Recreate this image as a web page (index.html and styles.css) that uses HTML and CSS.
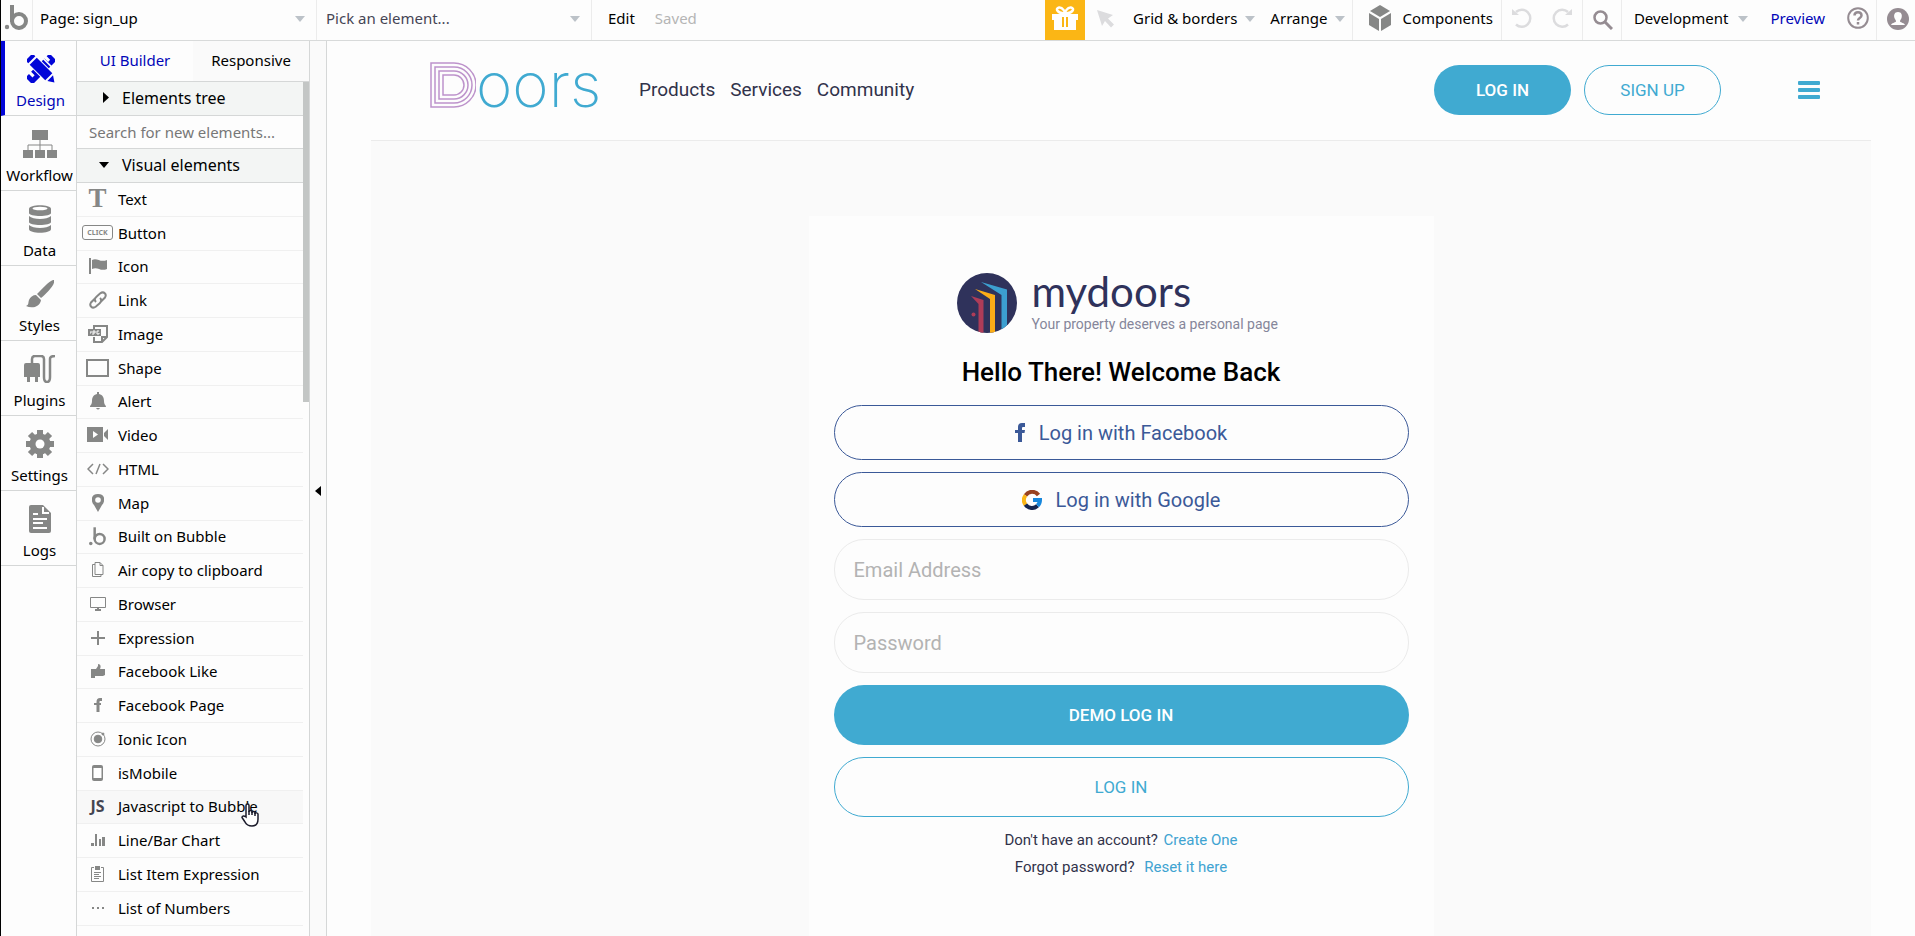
FILE: index.html
```
<!DOCTYPE html>
<html lang="en">
<head>
    <meta charset="utf-8">
    <title>sign_up | Bubble Editor</title>
    <link rel="stylesheet" href="styles.css">
</head>
<body>
<header class="topbar">
    <a class="topbar-logo" href="#" aria-label="Bubble">
        <svg width="24" height="26" viewBox="0 0 24 26" fill="none" stroke="#868786" stroke-width="4">
            <path d="M8 0v17"/><circle cx="15" cy="16" r="7"/><circle cx="3" cy="22" r="2.200" fill="#868786" stroke="none"/>
        </svg>
    </a>
    <div class="picker picker-page">
        <select aria-label="Page"><option>Page: sign_up</option></select>
    </div>
    <div class="picker picker-element">
        <select aria-label="Element"><option>Pick an element...</option></select>
    </div>
    <button class="top-btn">Edit</button>
    <span class="saved">Saved</span>
    <div class="topbar-right">
        <button class="gift" aria-label="Gift">
            <svg width="26" height="24" viewBox="0 0 26 24" fill="#fff">
                <path d="M0 8h26v6h-2v10H2V14H0z"/><path d="M10 11h6v10h-6z" fill="#fbb615"/><path d="M12 10h2v12h-2z"/>
                <path d="M13 7C5 8 3 2 7 1.500s6 5 6 5.500c0-.5 2-6 6-5.500S21 8 13 7z" fill="none" stroke="#fff" stroke-width="2.500"/>
            </svg>
        </button>
        <button class="icon-btn pointer" aria-label="Select">
            <svg width="20" height="20" viewBox="0 0 20 20" fill="#dcdcde"><path d="M1 1l16 5-5 3.500 6 6-3 3-6-6.500L6 17z"/></svg>
        </button>
        <button class="top-btn menu">Grid &amp; borders</button>
        <button class="top-btn menu arrange">Arrange</button>
        <button class="top-btn components">
            <svg width="22" height="26" viewBox="0 0 22 26" fill="#868786"><path d="M11 0l10 6-10 6L1 6z"/><path d="M0 8l10 6v12L0 20z"/><path d="M22 8l-10 6v12l10-6z"/></svg>
            Components
        </button>
        <div class="history">
            <button aria-label="Undo"><svg width="20" height="20" viewBox="0 0 20 20" fill="none" stroke="#dcdcde" stroke-width="2.500"><path d="M4 4a8.500 8.500 0 1 1 0 12.500"/><path d="M0 1v6h7z" fill="#dcdcde" stroke="none"/></svg></button>
            <button aria-label="Redo"><svg width="20" height="20" viewBox="0 0 20 20" fill="none" stroke="#dcdcde" stroke-width="2.500"><path d="M16 4a8.500 8.500 0 1 0 0 12.500"/><path d="M20 1v6h-7z" fill="#dcdcde" stroke="none"/></svg></button>
        </div>
        <button class="icon-btn search-btn" aria-label="Search">
            <svg width="20" height="20" viewBox="0 0 20 20" fill="none" stroke="#958c92" stroke-width="2.500"><circle cx="7.500" cy="7.500" r="6"/><path d="M12 12l7 7" stroke-width="3"/></svg>
        </button>
        <button class="top-btn menu development">Development</button>
        <a class="preview" href="#">Preview</a>
        <button class="icon-btn help" aria-label="Help">
            <svg width="22" height="22" viewBox="0 0 22 22" fill="none" stroke="#958c92"><circle cx="11" cy="11" r="9.800" stroke-width="2"/><path d="M7.500 8.500c0-4.500 7-4.500 7 0 0 2.500-3.500 2.500-3.500 5" stroke-width="2.500"/><path d="M11 15v2.500" stroke-width="2.500"/></svg>
        </button>
        <button class="icon-btn user" aria-label="Account">
            <svg width="22" height="22" viewBox="0 0 22 22"><circle cx="11" cy="11" r="11" fill="#958c92"/><path d="M11 4c3.500 0 4.500 3 3.500 6-.5 1.500-1.500 2-1.500 3.500 1 1.500 4 1 5 3.500H4c1-2.500 4-2 5-3.500C9 12 8 11.500 7.500 10c-1-3 0-6 3.500-6z" fill="#fff"/></svg>
        </button>
    </div>
</header>

<div class="editor">
    <nav class="rail">
        <a class="rail-item active" href="#">
            <svg width="28" height="28" viewBox="0 0 28 28" fill="#0206d8">
                <!-- ruler -->
                <g transform="rotate(-45 14 14)"><path d="M-3 10q0-1 1-1h4v5h3V9h19v5h3V9h3q1 0 1 1v8q0 1-1 1H-2q-1 0-1-1z"/><path d="M23 8v12" stroke="#fdfdfd" stroke-width="1.500"/></g>
                <!-- pencil -->
                <g transform="rotate(45 14 14)"><path d="M-4 8h30v12H-4z" fill="#fdfdfd"/><path d="M-3 11q0-2 2-2h2v10h-2q-2 0-2-2zM3 9h22v10H3zM27 10l6 4-6 4z"/></g>
            </svg>
            Design
        </a>
        <a class="rail-item" href="#">
            <svg width="34" height="28" viewBox="0 0 34 28" fill="#868786"><path d="M9 0h16v10H9zM0 20h10v8H0zM12 20h10v8H12zM24 20h10v8H24z"/><path d="M17 10v10M5 20v-5h24v5" fill="none" stroke="#868786"/></svg>
            Workflow
        </a>
        <a class="rail-item" href="#">
            <svg width="22" height="28" viewBox="0 0 22 28" fill="#868786"><path d="M0 4c0-5 22-5 22 0v4c0 4-22 4-22 0z"/><path d="M0 11c4 4 18 4 22 0v6c0 4-22 4-22 0zM0 20c4 4 18 4 22 0v4c0 5-22 5-22 0z"/><ellipse cx="11" cy="3.500" rx="7.500" ry="1.800" fill="#fff"/></svg>
            Data
        </a>
        <a class="rail-item" href="#">
            <svg width="28" height="28" viewBox="0 0 28 28" fill="#868786"><path d="M28 0c2 4-8 14-13 18l-4-4C15 10 25-1 28 0z"/><path d="M10 15l5 5c-1 7-9 9-15 6 3-1 2-3 3-6s4-5 7-5z"/></svg>
            Styles
        </a>
        <a class="rail-item" href="#">
            <svg width="32" height="28" viewBox="0 0 32 28" fill="#868786"><path d="M0 10q0-2 2-2h12q2 0 2 2v12h-2v5h-3v-5H6v5H3v-5H0z"/><path d="M8 8V4q0-3 3-3h6q3 0 3 3v18q0 5 3 5t3-5V4q0-3 5-3" fill="none" stroke="#868786" stroke-width="2.500"/></svg>
            Plugins
        </a>
        <a class="rail-item" href="#">
            <svg width="28" height="28" viewBox="0 0 28 28"><g stroke="#868786" stroke-width="6"><path d="M14 0v28M0 14h28M4 4l20 20M24 4L4 24"/></g><circle cx="14" cy="14" r="10.500" fill="#868786"/><circle cx="14" cy="14" r="4.500" fill="#fff"/></svg>
            Settings
        </a>
        <a class="rail-item" href="#">
            <svg width="22" height="28" viewBox="0 0 22 28"><path d="M2 0h12l8 8v18q0 2-2 2H2q-2 0-2-2V2q0-2 2-2z" fill="#868786"/><path d="M14 2v6h6M4 9h5M4 14h14M4 18h10M4 23h14" fill="none" stroke="#fff" stroke-width="2"/></svg>
            Logs
        </a>
    </nav>

    <aside class="panel">
        <div class="tabs">
            <button class="tab active">UI Builder</button>
            <button class="tab">Responsive</button>
        </div>
        <div class="palette">
            <button class="section"><svg width="6" height="11" viewBox="0 0 6 11"><path d="M0 0l6 5.500L0 11z"/></svg>Elements tree</button>
            <input class="search" type="text" placeholder="Search for new elements..." aria-label="Search for new elements">
            <button class="section"><svg width="10" height="6" viewBox="0 0 10 6"><path d="M0 0h10L5 6z"/></svg>Visual elements</button>
            <ul class="elements">
                <li><span class="glyph glyph-text">T</span>Text</li>
                <li><span class="glyph"><span class="glyph-click">CLICK</span></span>Button</li>
                <li><span class="glyph"><svg width="18" height="16" viewBox="0 0 18 16" fill="#868786"><path d="M0 0h2v16H0z"/><path d="M3 2c5-3 8 3 15 0v9c-7 3-9-3-15 0z"/></svg></span>Icon</li>
                <li><span class="glyph"><svg width="18" height="18" viewBox="0 0 18 18" fill="none" stroke="#868786" stroke-width="2"><path d="M7 11C4 8 7 6 11 2.500c4-3 7 1 5 4L12 10.500"/><path d="M11 7c3 3 0 5-4 8.500-4 3-7-1-5-4L6 7.500"/></svg></span>Link</li>
                <li><span class="glyph"><svg width="20" height="18" viewBox="0 0 20 18"><path d="M6 4V1h13v11l-5 5H6v-5M14 17v-5h5" fill="none" stroke="#868786" stroke-width="2"/><path d="M0 4h13v7H0z" fill="#868786"/><path d="M2 8h1V6m2 4V6h2v2H5m6-2H9v3h2V8" fill="none" stroke="#fff"/></svg></span>Image</li>
                <li><span class="glyph"><svg width="23" height="18" viewBox="0 0 23 18" fill="none" stroke="#868786" stroke-width="2"><path d="M1 1h21v16H1z"/></svg></span>Shape</li>
                <li><span class="glyph"><svg width="16" height="18" viewBox="0 0 16 18" fill="#868786"><path d="M7 0h2v2c4 1 5 4 5 7 0 4 2 4 2 6H0c0-2 2-2 2-6 0-3 1-6 5-7zM6 16h4q-2 3-4 0z"/></svg></span>Alert</li>
                <li><span class="glyph"><svg width="21" height="15" viewBox="0 0 21 15"><path d="M0 0h16v15H0zM17 6l4-4v11l-4-4z" fill="#868786"/><path d="M6 4l5 3.500L6 11z" fill="#fff"/></svg></span>Video</li>
                <li><span class="glyph"><svg width="22" height="12" viewBox="0 0 22 12" fill="none" stroke="#868786" stroke-width="1.500"><path d="M6 1L1 6l5 5M16 1l5 5-5 5M13 1L9 11"/></svg></span>HTML</li>
                <li><span class="glyph"><svg width="12" height="18" viewBox="0 0 12 18"><path d="M6 0c8 0 7 8 4 11l-4 7-4-7C-1 8-2 0 6 0z" fill="#868786"/><circle cx="6" cy="6" r="2.800" fill="#fff"/></svg></span>Map</li>
                <li><span class="glyph"><svg width="17" height="19" viewBox="0 0 24 26" fill="none" stroke="#868786" stroke-width="3.500"><path d="M8 0v17"/><circle cx="15" cy="16.500" r="7"/><circle cx="2.500" cy="23" r="2.500" fill="#868786" stroke="none"/></svg></span>Built on Bubble</li>
                <li><span class="glyph"><svg width="12" height="15" viewBox="0 0 12 15" fill="none" stroke="#868786"><path d="M3 .5h5l3 3v9H3zM8 .5v3h3M3 2.500H.5v12H9v-2"/></svg></span>Air copy to clipboard</li>
                <li><span class="glyph"><svg width="16" height="14" viewBox="0 0 16 14"><path d="M.5.5h15v10H.5z" fill="none" stroke="#868786"/><path d="M7 11h2v1h2v2H5v-2h2z" fill="#868786"/></svg></span>Browser</li>
                <li><span class="glyph"><svg width="14" height="14" viewBox="0 0 14 14" stroke="#868786" stroke-width="2"><path d="M7 0v14M0 7h14"/></svg></span>Expression</li>
                <li><span class="glyph"><svg width="14" height="14" viewBox="0 0 14 14" fill="#868786"><path d="M0 5h5l2-3V0c3 0 3 3 2 5h5v6l-2 1H4v2H0z"/></svg></span>Facebook Like</li>
                <li><span class="glyph"><svg width="8" height="14" viewBox="0 0 8 14" fill="none" stroke="#868786" stroke-width="3"><path d="M8 1.500H6Q4 1.500 4 4v10"/><path d="M0 6h7" stroke-width="2"/></svg></span>Facebook Page</li>
                <li><span class="glyph"><svg width="16" height="16" viewBox="0 0 16 16" fill="none" stroke="#868786"><circle cx="8" cy="8" r="7"/><circle cx="8" cy="8" r="3.800" fill="#868786"/><circle cx="13" cy="3" r="1" fill="#868786"/></svg></span>Ionic Icon</li>
                <li><span class="glyph"><svg width="11" height="16" viewBox="0 0 11 16"><rect width="11" height="16" rx="2" fill="#868786"/><path d="M1.500 3h8v10h-8z" fill="#fff"/></svg></span>isMobile</li>
                <li class="hovered"><span class="glyph glyph-js">JS</span>Javascript to Bubble
                    <svg class="cursor" width="18" height="24" viewBox="0 0 18 24" fill="#fff" stroke="#1b1b2b" stroke-width="1.500"><path d="M5 14V2.500c0-2 3-2 3 0V9c0-2 3-2 3 0v1c0-2 3-2 3 0v1c0-2 3-1 3 0v5c0 4-2 7-6 7s-6-2-7-4l-3-4.500c0-2 2-2 4-.5z"/><path d="M8 8v4M11 9v3M14 10v3"/></svg>
                </li>
                <li><span class="glyph"><svg width="14" height="12" viewBox="0 0 14 12" fill="#868786"><path d="M0 9h3v3H0zM4 0h2v12H4zM8 5h2v7H8zM11 3h3v9h-3z"/></svg></span>Line/Bar Chart</li>
                <li><span class="glyph"><svg width="13" height="16" viewBox="0 0 13 16" fill="none" stroke="#868786"><path d="M3 1.500H.5v14h12v-14H10M3 6.500h7M3 8.500h5M3 10.500h7M3 12.500h5"/><path d="M4 0h5v4H4z" fill="#868786" stroke="none"/></svg></span>List Item Expression</li>
                <li><span class="glyph"><svg width="12" height="2" viewBox="0 0 12 2" fill="#868786"><path d="M0 0h2v2H0zM5 0h2v2H5zM10 0h2v2h-2z"/></svg></span>List of Numbers</li>
            </ul>
            <div class="scroll-thumb"></div>
        </div>
    </aside>
    <button class="collapse" aria-label="Collapse panel"><svg width="6" height="10" viewBox="0 0 6 10"><path d="M6 0v10L0 5z"/></svg></button>

    <main class="canvas">
        <header class="site-header">
            <a class="site-logo" href="#" aria-label="Doors">
                <svg width="46" height="46" viewBox="0 0 46 46" fill="none" stroke="#bd93cb" stroke-width="1.500"><path d="M1 1h23a22 22 0 0 1 0 44H1z"/><path d="M5 5h19a18 18 0 0 1 0 36H5z"/><path d="M9 9h15a14 14 0 0 1 0 28H9z"/><path d="M13 13h11a10 10 0 0 1 0 20H13z"/></svg>
                <span>oors</span>
            </a>
            <nav class="site-nav">
                <a href="#">Products</a>
                <a href="#">Services</a>
                <a href="#">Community</a>
            </nav>
            <div class="site-actions">
                <button class="btn btn-solid">LOG IN</button>
                <button class="btn btn-outline">SIGN UP</button>
            </div>
            <button class="burger" aria-label="Menu"><span></span><span></span><span></span></button>
        </header>
        <section class="site-body">
            <form class="card">
                <div class="brand">
                    <svg width="60" height="60" viewBox="0 0 60 60">
                        <clipPath id="disc"><circle cx="30" cy="30" r="30"/></clipPath>
                        <g clip-path="url(#disc)">
                            <path d="M0 0h60v60H0z" fill="#2f325b"/>
                            <path d="M24 9l26 7.500V60h-5.500V22z" fill="#3c9fd0"/>
                            <path d="M18 16l20 6v38h-5V26z" fill="#fbad18"/>
                            <path d="M14 23l12.500 4v33h-5V31z" fill="#ae3c58"/>
                            <circle cx="16.500" cy="41.500" r="2" fill="#ae3c58"/>
                        </g>
                    </svg>
                    <div class="brand-text">
                        <span class="brand-name">mydoors</span>
                        <span class="brand-tagline">Your property deserves a personal page</span>
                    </div>
                </div>
                <h1 class="card-title">Hello There! Welcome Back</h1>
                <div class="fields">
                    <button class="btn btn-social" type="button">
                        <svg width="10" height="19" viewBox="0 0 10 19" fill="#3b5998"><path d="M10 0v4H8Q7 4 7 5v2h3l-.5 3H7v9H3v-9H0V7h3V4q0-4 4-4z"/></svg>
                        Log in with Facebook
                    </button>
                    <button class="btn btn-social" type="button">
                        <svg width="20" height="20" viewBox="0 0 20 20" fill="none" stroke-width="4"><path d="M16.500 5A8 8 0 0 0 3.500 5.300" stroke="#984220"/><path d="M3.500 5.300a8 8 0 0 0 0 9.400" stroke="#fbb615"/><path d="M3.500 14.700a8 8 0 0 0 12 1.100" stroke="#16264f"/><path d="M15.500 15.800A8 8 0 0 0 18 10h-7" stroke="#1787dc"/></svg>
                        Log in with Google
                    </button>
                    <input type="email" placeholder="Email Address" aria-label="Email Address">
                    <input type="password" placeholder="Password" aria-label="Password">
                    <button class="btn btn-solid btn-wide" type="button">DEMO LOG IN</button>
                    <button class="btn btn-outline btn-wide" type="button">LOG IN</button>
                </div>
                <p class="hint">Don't have an account? <a href="#">Create One</a></p>
                <p class="hint hint-reset">Forgot password? <a href="#">Reset it here</a></p>
            </form>
        </section>
    </main>
</div>
</body>
</html>
```

FILE: styles.css
```
* {
    box-sizing: border-box;
}

html, body {
    height: 100%;
    margin: 0;
}

body {
    display: flex;
    flex-direction: column;
    overflow: hidden;
    background-color: #fdfdfd;
    border-left: 1px solid #000;
    color: #000;
    font-family: "Noto Sans", sans-serif;
    font-size: 15px;
    line-height: 20px;
}

button, input, select {
    font: inherit;
    color: inherit;
    background: none;
    border: none;
    border-radius: 0;
    margin: 0;
    padding: 0;
}

a {
    color: inherit;
    text-decoration: none;
}

svg {
    display: block;
    flex: none;
}

/* top bar */

.topbar {
    display: flex;
    flex: none;
    height: 41px;
    border-bottom: 1px solid #d8dada;
    white-space: nowrap;
}

.topbar-logo {
    width: 32px;
    padding: 5px 0 0 3px;
    border-right: 1px solid #ececec;
}

.picker {
    position: relative;
    border-right: 1px solid #ececec;
}

.picker select {
    appearance: none;
    width: 100%;
    height: 36px;
    padding-left: 7px;
    outline: none;
}

.picker-page {
    width: 284px;
}

.picker-element {
    width: 275px;
    padding-left: 2px;
    color: #454555;
}

.picker::after, .menu::after {
    content: "";
    border: 5px solid transparent;
    border-top: 6px solid #bcc2c8;
    border-bottom: none;
}

.picker::after {
    position: absolute;
    top: 16px;
    right: 11px;
}

.top-btn {
    display: flex;
    align-items: center;
    height: 36px;
}

.picker + .top-btn {
    margin-left: 16px;
}

.saved {
    margin-left: 20px;
    line-height: 36px;
    color: #b5b5b5;
}

.topbar-right {
    display: flex;
    margin-left: auto;
}

.gift {
    width: 40px;
    padding: 0 7px 5px;
    background-color: #fbb615;
}

.icon-btn {
    height: 40px;
}

.pointer {
    width: 48px;
    padding: 0 0 2px 11px;
}

.menu::after {
    margin: 2px 0 0 8px;
}

.arrange {
    padding: 0 7px 0 15px;
}

.components {
    gap: 11px;
    height: 40px;
    padding: 0 8px 4px 16px;
    border-left: 1px solid #ececec;
    border-right: 1px solid #ececec;
}

.history {
    display: flex;
    gap: 20px;
    padding: 0 10px 4px;
    border-right: 1px solid #ececec;
}

.search-btn {
    width: 39px;
    padding-left: 10px;
    border-right: 1px solid #ececec;
}

.development {
    padding-left: 12px;
}

.development::after {
    margin-left: 10px;
}

.preview {
    margin: 0 22px;
    line-height: 36px;
    color: #0206b8;
}

.help {
    width: 30px;
    padding-bottom: 4px;
    border-right: 1px solid #ececec;
}

.user {
    width: 38px;
    padding: 0 0 2px 10px;
}

/* side rail */

.editor {
    display: flex;
    flex: 1;
    min-height: 0;
}

.rail {
    flex: none;
    width: 76px;
    border-right: 1px solid #d5d7d7;
}

.rail-item {
    display: flex;
    flex-direction: column;
    align-items: center;
    gap: 7px;
    height: 75px;
    padding: 14px 0 0 2px;
    border-bottom: 1px solid #d5d7d7;
}

.rail-item.active {
    padding-left: 0;
    border-left: 4px solid #0206d8;
    color: #0206b8;
}

/* elements panel */

.panel {
    display: flex;
    flex-direction: column;
    flex: none;
    width: 233px;
    border-right: 1px solid #d5d7d7;
}

.tabs {
    display: flex;
    flex: none;
    height: 41px;
    border-bottom: 1px solid #d5d7d7;
}

.tab {
    flex: 1;
    padding-bottom: 2px;
    background-color: #fafafa;
}

.tab.active {
    background-color: #fdfdfd;
    color: #0206b8;
}

.palette {
    position: relative;
    flex: 1;
    min-height: 0;
    padding-right: 6px;
    overflow: hidden;
}

.scroll-thumb {
    position: absolute;
    top: 0;
    right: 0;
    width: 6px;
    height: 320px;
    background-color: #c3c6c5;
}

.section {
    display: grid;
    grid-template-columns: 45px 1fr;
    align-items: center;
    width: 100%;
    height: 34px;
    padding-bottom: 2px;
    background-color: #f3f5f4;
    border-bottom: 1px solid #d5d7d7;
    font-size: 16px;
    text-align: left;
}

.section svg {
    justify-self: end;
    margin-right: 13px;
}

.search {
    display: block;
    width: 100%;
    height: 33px;
    padding-left: 12px;
    border-bottom: 1px solid #d5d7d7;
    outline: none;
}

.search::placeholder {
    color: #777;
}

.elements {
    margin: 0;
    padding: 0;
    list-style: none;
}

.elements li {
    display: flex;
    align-items: center;
    height: 34px;
    padding-bottom: 2px;
    border-bottom: 1px solid #f0f0f0;
    white-space: nowrap;
}

.elements li:nth-child(4n+3) {
    height: 33px;
}

.elements .hovered {
    position: relative;
    background-color: #f8f8f8;
}

.glyph {
    display: flex;
    justify-content: center;
    width: 41px;
}

.glyph-text {
    color: #868786;
    font: bold 27px "Liberation Serif", serif;
}

.glyph-click {
    width: 31px;
    border: 1px solid #868786;
    border-radius: 3px;
    color: #868786;
    font-size: 7px;
    font-weight: bold;
    line-height: 13px;
    text-align: center;
}

.glyph-js {
    color: #454550;
    font-size: 16px;
    font-weight: bold;
}

.cursor {
    position: absolute;
    top: 12px;
    left: 164px;
}

.collapse {
    display: flex;
    align-items: center;
    justify-content: center;
    flex: none;
    width: 17px;
    padding-top: 4px;
    background-color: #fafafa;
    border-right: 1px solid #d5d7d7;
}

/* edited page */

.canvas {
    display: flex;
    flex-direction: column;
    flex: 1;
    min-width: 0;
    padding: 0 44px;
    font-family: Roboto, sans-serif;
    font-size: 17px;
}

.site-header {
    display: flex;
    align-items: center;
    flex: none;
    height: 100px;
    padding: 0 51px 2px 59px;
    border-bottom: 1px solid #ebebeb;
}

.site-logo {
    display: flex;
    align-items: center;
    width: 169px;
    padding-bottom: 10px;
    color: #40aad1;
    font-family: Inter, sans-serif;
    font-size: 62px;
    font-weight: 200;
    line-height: 44px;
}

.site-nav {
    display: flex;
    gap: 15px;
    margin-left: 40px;
    color: #31324a;
    font-size: 19px;
}

.site-actions {
    display: flex;
    gap: 13px;
    margin-left: auto;
}

.btn {
    width: 137px;
    height: 50px;
    border-radius: 30px;
    white-space: nowrap;
}

.btn-solid {
    background-color: #40aad1;
    color: #fff;
    font-weight: 500;
}

.btn-outline {
    border: 1px solid #40aad1;
    color: #40aad1;
}

.burger {
    display: grid;
    gap: 3px;
    width: 22px;
    margin-left: 77px;
}

.burger span {
    height: 4px;
    border-radius: 1px;
    background-color: #40aad1;
}

.site-body {
    display: flex;
    justify-content: center;
    flex: 1;
    min-height: 0;
    padding-top: 75px;
    background-color: #fafafa;
}

.card {
    width: 625px;
    padding: 57px 25px 0;
    background-color: #fdfdfd;
}

.brand {
    display: flex;
    gap: 15px;
    margin-left: 123px;
}

.brand-text {
    display: flex;
    flex-direction: column;
}

.brand-name {
    color: #2f325b;
    font-family: Lato, sans-serif;
    font-size: 42px;
    line-height: 36px;
}

.brand-tagline {
    color: #85869a;
    font-size: 14px;
    line-height: 30px;
}

.card-title {
    margin: 17px 0;
    font-size: 26px;
    font-weight: 500;
    line-height: 32px;
    text-align: center;
}

.fields {
    display: grid;
    gap: 12px;
    font-size: 20px;
}

.fields input {
    width: 100%;
    height: 61px;
    padding: 0 19px;
    border: 1px solid #ebebeb;
    border-radius: 30px;
    outline: none;
}

.fields input::placeholder {
    color: #b3b3b3;
}

.btn-social {
    display: flex;
    align-items: center;
    justify-content: center;
    gap: 14px;
    width: 100%;
    height: 55px;
    border: 1px solid #3b5998;
    color: #3b5998;
}

.btn-wide {
    width: 100%;
    height: 60px;
    font-size: 17px;
}

.hint {
    margin: 13px 0 0;
    color: #31324a;
    font-size: 15px;
    line-height: 20px;
    text-align: center;
}

.hint-reset {
    margin-top: 7px;
}

.hint a {
    margin-left: 2px;
    color: #40a3d1;
}

.hint-reset a {
    margin-left: 6px;
}
```
